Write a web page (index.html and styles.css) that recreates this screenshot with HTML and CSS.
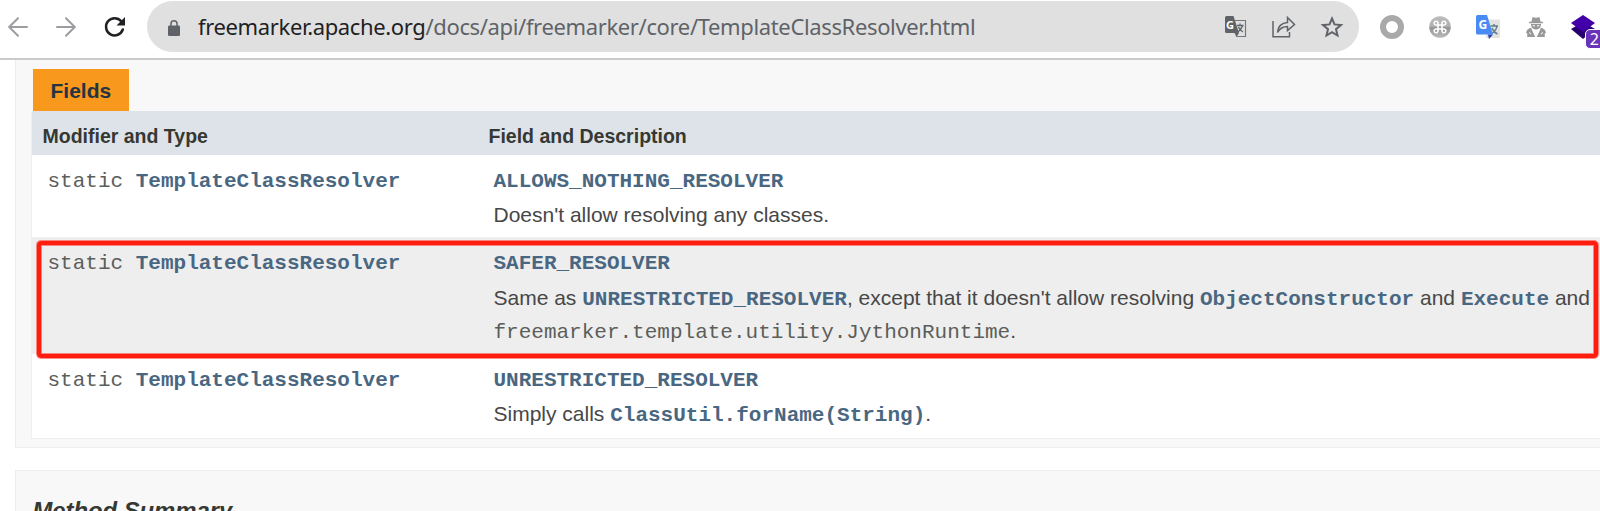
FILE: index.html
```html
<!DOCTYPE html>
<html lang="en">
<head>
<meta charset="utf-8">
<title>TemplateClassResolver</title>
<link rel="stylesheet" href="styles.css">
</head>
<body>
<header class="toolbar">
  <nav class="nav">
    <svg width="20" height="20" viewBox="0 0 20 20" class="muted"><path d="M19 10H1.5M10 1.2L1.2 10L10 18.800"/></svg>
    <svg width="20" height="20" viewBox="0 0 20 20" class="muted"><path d="M1 10H18.500M10 1.200L18.800 10L10 18.800"/></svg>
    <svg width="22" height="20" viewBox="0 0 22 20" class="reload"><path d="M17.200 4.200A8.600 8.600 0 1 0 18.800 12.500"/><path class="head" d="M21 0V8.500H12.500Z"/></svg>
  </nav>
  <div class="omnibox">
    <svg class="lock" width="12" height="16" viewBox="0 0 12 16"><rect x="0" y="5.500" width="12" height="10.500" rx="1.300" fill="#5f6368"/><path d="M3 6V3.700a3 3 0 0 1 6 0V6" fill="none" stroke="#5f6368" stroke-width="1.500"/></svg>
    <div class="url"><span class="host">freemarker.apache.org</span>/docs/api/freemarker/core/TemplateClassResolver.html</div>
    <div class="actions">
      <svg width="22" height="22" viewBox="0 0 22 22"><path d="M9 4.500H20.500V20.500H11.500" fill="none" stroke="#75787b" stroke-width="1.200"/><path d="M1.500 0H8.500L14 17H1.500Q0 17 0 15.500V1.500Q0 0 1.500 0Z M9.500 17H14L11.500 21Z" fill="#5f6368"/><path d="M12 9.500H18.500M15 7.500V9.500M17.500 9.500C17 12 15 14.500 13 16M13.500 11C14 12.500 16 15 18 16" fill="none" stroke="#5f6368" stroke-width="1.300"/><text x="1" y="13" class="g" font-size="11">G</text></svg>
      <svg width="24" height="22" viewBox="0 0 24 22"><path d="M1 5V20.800H17.500V16M5.500 16.500C6 10 9 7 15.500 6.500V1.500L22.500 8.500L15.500 14.500V10.500C11 10.500 8 12 5.500 16.500Z" fill="none" stroke="#5f6368" stroke-width="1.500" stroke-linejoin="miter"/></svg>
      <svg width="22" height="22" viewBox="0 0 22 22"><path d="M11 2.500L13.500 8.400L20 9L15 13.200L16.500 19.500L11 16.200L5.500 19.500L7 13.200L2 9L8.500 8.400Z" fill="none" stroke="#5f6368" stroke-width="2"/></svg>
    </div>
  </div>
  <div class="extensions">
    <svg width="24" height="24" viewBox="0 0 24 24"><circle cx="12" cy="12" r="9" fill="none" stroke="#a9a9a9" stroke-width="6"/></svg>
    <svg width="22" height="22" viewBox="0 0 22 22"><defs><linearGradient id="disc" x2="0" y2="1"><stop offset="0" stop-color="#bdbdbd"/><stop offset=".5" stop-color="#b0b0b0"/><stop offset=".52" stop-color="#949494"/><stop offset="1" stop-color="#bbb"/></linearGradient></defs><circle cx="11" cy="11" r="10.800" fill="url(#disc)"/><path d="M9 9H13V13H9ZM9 9H7.200A1.900 1.900 0 1 1 9 7.200ZM13 9V7.200A1.900 1.900 0 1 1 14.800 9ZM13 13H14.800A1.900 1.900 0 1 1 13 14.800ZM9 13V14.800A1.900 1.900 0 1 1 7.200 13Z" fill="none" stroke="#fff" stroke-width="1.600"/></svg>
    <svg width="24" height="24" viewBox="0 0 24 24"><rect x="10" y="4.500" width="14" height="18.500" rx="1" fill="#e2e2e2"/><path d="M14.500 11H22M18 9V11M21 11C20.500 14 18 17 16 18.500M16 13C17 15.500 19 18 21.500 19" fill="none" stroke="#607d8b" stroke-width="1.500"/><path d="M12 19.500H17L13 24Z" fill="#3040a8"/><path d="M1.500 0H11L17 19.500H1.500Q0 19.500 0 18V1.500Q0 0 1.500 0Z" fill="#4a8af4"/><text x="2.500" y="13.500" class="g" font-size="12">G</text></svg>
    <svg width="20" height="20" viewBox="0 0 20 20" fill="#999"><path d="M6.500 0Q10 1.300 13.500 0L14.500 4.500L17 5V6.300H3V5L5.500 4.500ZM5 7H15V8Q14 12.500 10 12.500Q6 12.500 5 8Z"/><path d="M5.500 12L9.200 20H1.200V16.500L0 15.500Q1 11.500 5.500 10.500ZM14.500 12L10.800 20H18.800V16.500L20 15.500Q19 11.500 14.500 10.500Z"/><path d="M6.500 8H9V9.500H7ZM11 8H13.500L13 9.500H11Z" fill="#ddd"/><path d="M3 15.500L5 17M17 15.500L15 17" stroke="#fff"/></svg>
    <div class="stack">
      <svg width="24" height="24" viewBox="0 0 24 24"><path d="M0 14L12 7L24 14L12 24Z" fill="#270070"/><path d="M0 8L12 0L24 8L12 17Z" fill="#4400a8"/></svg>
      <span class="badge">2</span>
    </div>
  </div>
</header>
<main class="page">
  <section class="panel summary">
    <div class="tab">Fields</div>
    <div class="table">
      <div class="row head-row"><div>Modifier and Type</div><div>Field and Description</div></div>
      <div class="row body-row">
        <div class="sig"><code>static <b>TemplateClassResolver</b></code></div>
        <div><div class="sig"><code><b>ALLOWS_NOTHING_RESOLVER</b></code></div><p class="desc">Doesn't allow resolving any classes.</p></div>
      </div>
      <div class="row body-row alt">
        <div class="sig"><code>static <b>TemplateClassResolver</b></code></div>
        <div><div class="sig"><code><b>SAFER_RESOLVER</b></code></div><p class="desc">Same as <code><b>UNRESTRICTED_RESOLVER</b></code>, except that it doesn't allow resolving <code><b>ObjectConstructor</b></code> and <code><b>Execute</b></code> and<br><code>freemarker.template.utility.JythonRuntime</code>.</p></div>
        <div class="highlight"></div>
      </div>
      <div class="row body-row last">
        <div class="sig"><code>static <b>TemplateClassResolver</b></code></div>
        <div><div class="sig"><code><b>UNRESTRICTED_RESOLVER</b></code></div><p class="desc">Simply calls <code><b>ClassUtil.forName(String)</b></code>.</p></div>
      </div>
    </div>
  </section>
  <section class="panel methods"><h3>Method Summary</h3></section>
</main>
</body>
</html>
```
FILE: styles.css
```css
* { box-sizing: border-box; }
body { margin: 0; height: 511px; overflow: hidden; background: #fff; font-family: "Liberation Sans", Arial, sans-serif; color: #353833; }
svg { display: block; flex: none; overflow: visible; }
.toolbar { height: 60px; border-bottom: 2px solid #cacaca; display: flex; align-items: flex-start; padding-top: 1px; }
.nav { width: 147px; height: 51px; padding-left: 8px; display: flex; align-items: center; gap: 28px; flex: none; }
.muted path { fill: none; stroke: #9b9da0; stroke-width: 2; stroke-linecap: round; }
.reload path { fill: none; stroke: #202124; stroke-width: 2.500px; stroke-linecap: round; }
.reload .head { fill: #202124; stroke: none; }
.omnibox { width: 1212px; height: 51px; border-radius: 26px; background: #e0e0e0; display: flex; align-items: center; padding: 0 16px 0 21px; flex: none; }
.lock { margin-top: 2px; }
.url { margin-left: 18px; padding-bottom: 2px; font: 22px/48px "Noto Sans", sans-serif; letter-spacing: -0.36px; color: #5f6368; white-space: nowrap; flex: 1; }
.host { color: #202124; }
.actions { display: flex; align-items: center; gap: 25px; padding-top: 1px; }
.g { font-family: "Open Sans", sans-serif; font-weight: 700; fill: #fff; }
.extensions { height: 51px; padding-left: 21px; display: flex; align-items: center; gap: 25.200px; }
.stack { position: relative; }
.badge { position: absolute; left: 14px; top: 14px; width: 25px; height: 20px; border: 1px solid #fff; border-radius: 5px; background: #6932b8; color: #fff; font: 16px/18px "Noto Sans", sans-serif; padding-left: 4px; }
.page { padding-left: 15px; }
.panel { border: 1px solid #ededed; border-right: 0; background: #f8f8f8; }
.summary { height: 388px; border-top: 0; padding: 9px 0 0 15px; }
.tab { width: 96px; height: 42px; margin-left: 2px; background: #f8981d; color: #253441; font: bold 21px/43px "Liberation Sans", sans-serif; padding-left: 17.500px; }
.table { height: 328px; border: 1px solid #eee; border-width: 0 0 1px 1px; background: #fff; }
.row { display: grid; grid-template-columns: 446px 1fr; white-space: nowrap; }
.head-row { height: 44px; background: #dee3e9; font: bold 19.500px/50px "Liberation Sans", sans-serif; padding-left: 10.500px; }
.body-row { position: relative; height: 82px; padding: 10px 0 0 15.500px; }
.alt { height: 117px; background: #eeeeee; }
.alt .desc { padding-top: 1px; }
.last { height: 83px; }
.sig { height: 34px; line-height: 34px; font-size: 21px; }
code { font: 21px/1 "Liberation Mono", monospace; color: #5c5e5a; }
.sig code { line-height: 34px; display: block; }
b { color: #4a6782; }
.desc { margin: 0; font-size: 21px; line-height: 32.500px; color: #474747; }
.highlight { position: absolute; left: 4.500px; top: 4px; width: 1561px; height: 117px; border: 4px solid #ff1d10; border-radius: 4px; box-shadow: 0 0 0 1px #ff1d1080, inset 0 0 0 1px #ff1d1080; }
.methods { height: 41px; margin-top: 22px; padding: 22px 0 0 16.500px; border-bottom: 0; overflow: hidden; }
h3 { margin: 0; font: italic bold 23.800px/36px "Liberation Sans", sans-serif; }
```
